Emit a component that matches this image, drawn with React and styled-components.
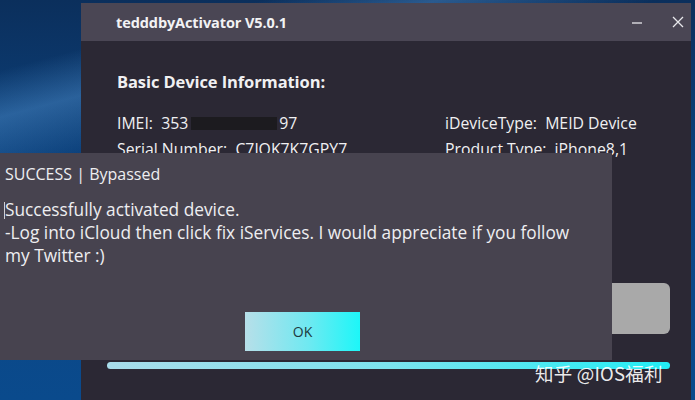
import React from "react";
import styled, { createGlobalStyle } from "styled-components";

const Global = createGlobalStyle`
  html, body { margin: 0; padding: 0; }
  body { width: 695px; height: 400px; overflow: hidden; font-family: "Open Sans", "Noto Sans", sans-serif; }
`;

const Desktop = styled.div`
  position: relative;
  width: 695px;
  height: 400px;
  overflow: hidden;
  background:
    linear-gradient(165deg, rgba(80,150,220,0) 0%, rgba(80,150,220,0) 12%, rgba(100,170,235,0.35) 20%, rgba(80,150,220,0) 30%),
    linear-gradient(180deg, #0b2f5c 0%, #0c4685 50%, #0a4a8c 100%);
`;

const Window = styled.div`
  position: absolute;
  left: 81px;
  top: 3px;
  width: 610px;
  height: 400px;
  background: #2b2834;
  display: flex;
  flex-direction: column;
`;

const TitleBar = styled.div`
  height: 38px;
  flex: none;
  background: #4a4654;
  display: flex;
  align-items: center;
  gap: 15px;
  padding: 0 0 0 35px;
  color: #f2f2f4;
`;

const Title = styled.div`
  flex: 1;
  font-weight: 700;
  font-size: 14.5px;
  letter-spacing: -0.1px;
`;

const WinBtn = styled.div`
  width: 26px;
  height: 38px;
  display: flex;
  align-items: center;
  justify-content: center;
`;

const Body = styled.div`
  flex: 1;
  display: flex;
  flex-direction: column;
  padding: 26px 21px 0 36px;
  color: #f0f0f2;
`;

const Heading = styled.div`
  font-weight: 700;
  font-size: 16.5px;
  letter-spacing: -0.1px;
  height: 24px;
  line-height: 24px;
  margin: 3px 0 17px;
`;

const InfoGrid = styled.div`
  display: grid;
  grid-template-columns: 328px 1fr;
  row-gap: 2px;
  font-size: 15.8px;
  line-height: 24px;
`;

const Cell = styled.div`
  display: flex;
  align-items: center;
  white-space: nowrap;
`;

const Redact = styled.span`
  display: inline-block;
  width: 86px;
  height: 13px;
  background: #1c1b1f;
  margin: 0 2px 0 3px;
`;

const ActionRow = styled.div`
  display: flex;
  justify-content: flex-end;
  margin-top: 122px;
`;

const GreyButton = styled.div`
  width: 170px;
  height: 51px;
  border-radius: 6px;
  background: #a9a9a9;
`;

const Progress = styled.div`
  margin: 28px 0 0 -10px;
  height: 7px;
  border-radius: 4px;
  background: linear-gradient(90deg, #a8dcea 0%, #7ce3ee 50%, #22eef5 100%);
`;

const Dialog = styled.div`
  position: absolute;
  left: 0;
  top: 153px;
  width: 612px;
  height: 207px;
  background: #47434f;
  color: #eeeef1;
  display: flex;
  flex-direction: column;
  padding: 10px 0 9px 5px;
  box-sizing: border-box;
`;

const DialogTitle = styled.div`
  font-size: 16px;
  line-height: 22px;
  margin-bottom: 13px;
`;

const Message = styled.div`
  position: relative;
  font-size: 17.3px;
  line-height: 23px;
  width: 585px;
  flex: 1;
`;

const Caret = styled.span`
  position: absolute;
  left: -1px;
  top: 4px;
  width: 1px;
  height: 17px;
  background: #cfcfd4;
`;

const ButtonRow = styled.div`
  display: flex;
  padding-left: 240px;
`;

const OkButton = styled.div`
  width: 115px;
  height: 39px;
  display: flex;
  align-items: center;
  justify-content: center;
  font-size: 14px;
  color: #1d3a40;
  background: linear-gradient(90deg, #b7dfe9 0%, #6fe9f1 55%, #1df6f8 100%);
`;

const Watermark = styled.div`
  position: absolute;
  left: 535px;
  top: 359px;
  font-family: "Noto Sans CJK SC", "Noto Sans", sans-serif;
  font-size: 18.5px;
  line-height: 28px;
  color: rgba(255,255,255,0.92);
  letter-spacing: 0.2px;
`;

export default function App() {
  return (
    <>
      <Global />
      <Desktop>
        <Window>
          <TitleBar>
            <Title>tedddbyActivator V5.0.1</Title>
            <WinBtn>
              <svg width="12" height="12" viewBox="0 0 12 12">
                <path d="M1 7h10" stroke="#e8e8ec" strokeWidth="1.3" />
              </svg>
            </WinBtn>
            <WinBtn>
              <svg width="12" height="12" viewBox="0 0 12 12">
                <path d="M1 1l10 10M11 1L1 11" stroke="#e8e8ec" strokeWidth="1.3" />
              </svg>
            </WinBtn>
          </TitleBar>
          <Body>
            <Heading>Basic Device Information:</Heading>
            <InfoGrid>
              <Cell>IMEI:&nbsp; 353<Redact />97</Cell>
              <Cell>iDeviceType:&nbsp; MEID Device</Cell>
              <Cell>Serial Number:&nbsp; C7JQK7K7GPY7</Cell>
              <Cell>Product Type:&nbsp; iPhone8,1</Cell>
            </InfoGrid>
            <ActionRow>
              <GreyButton />
            </ActionRow>
            <Progress />
          </Body>
        </Window>
        <Dialog>
          <DialogTitle>SUCCESS | Bypassed</DialogTitle>
          <Message>
            <Caret />
            Successfully activated device.
            <br />
            -Log into iCloud then click fix iServices. I would appreciate if you follow my Twitter :)
          </Message>
          <ButtonRow>
            <OkButton>OK</OkButton>
          </ButtonRow>
        </Dialog>
        <Watermark>知乎 @IOS福利</Watermark>
      </Desktop>
    </>
  );
}
